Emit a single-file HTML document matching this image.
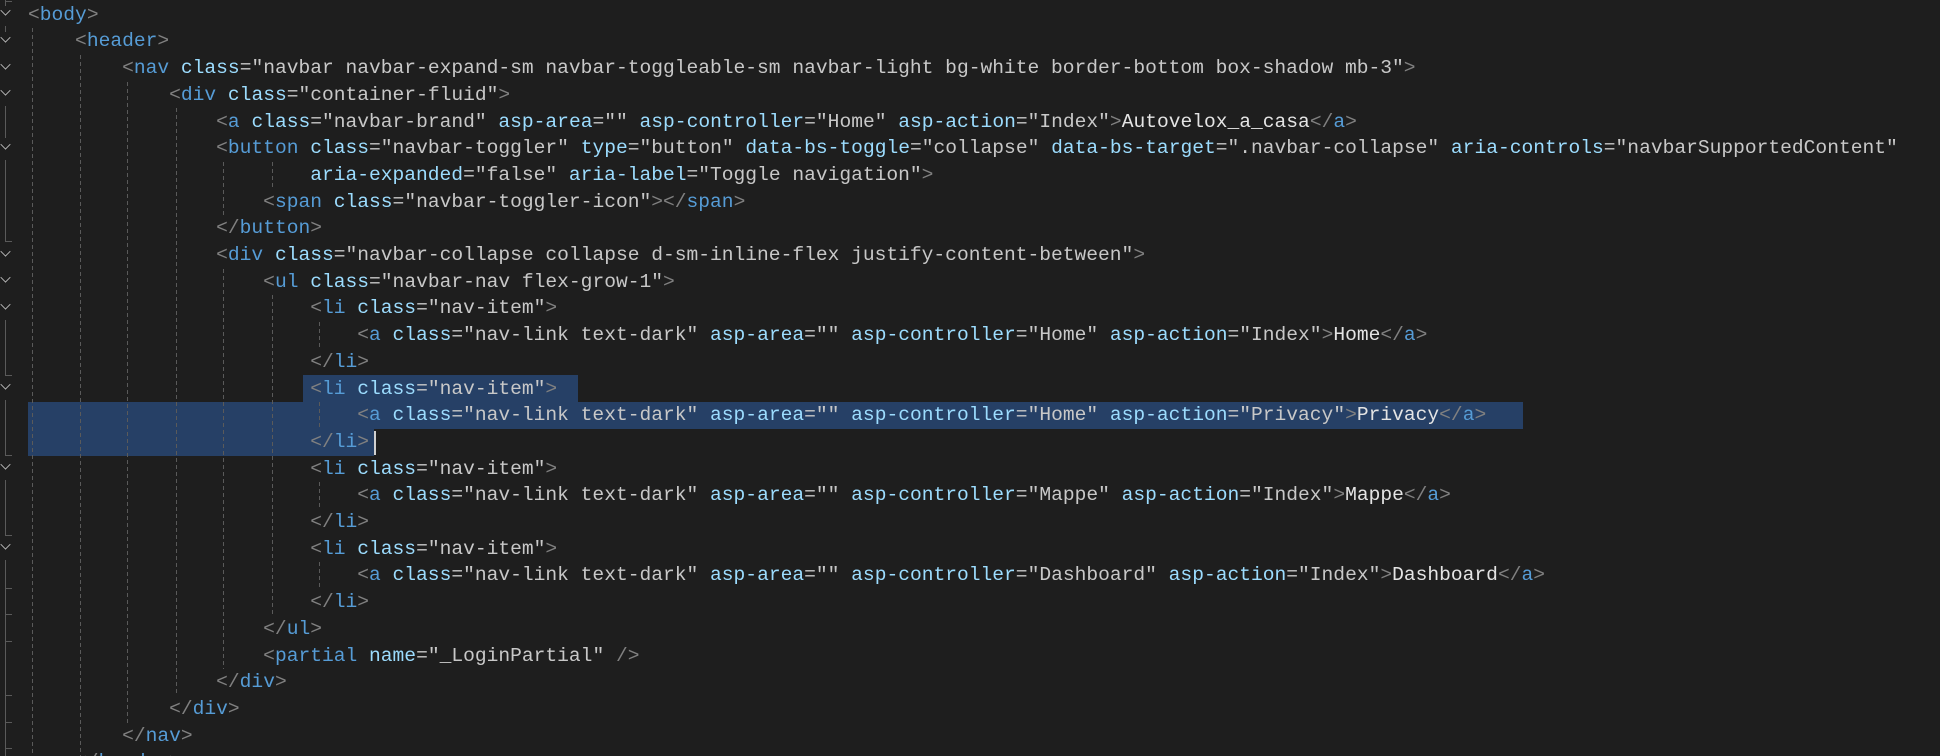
<!DOCTYPE html>
<html><head><meta charset="utf-8"><style>
html,body{margin:0;padding:0;background:#1e1e1e;width:1940px;height:756px;overflow:hidden;}
#ed{position:relative;width:1940px;height:756px;font-family:"Liberation Mono",monospace;font-size:19.6px;}
.l{position:absolute;left:28px;height:26.7px;line-height:26.7px;white-space:pre;color:#c8c8c8;}
.b{color:#808080}.t{color:#569cd6}.n{color:#9cdcfe}.v{color:#c8c8c8}.x{color:#e4e4e4}
.g{position:absolute;width:1px;background:repeating-linear-gradient(to bottom,#5a5a5a 0 4px,transparent 4px 7px);}
.hl{position:absolute;background:#264066;}
.cv{position:absolute;left:1px;width:8px;height:8px;border-right:1.5px solid #c5c5c5;border-bottom:1.5px solid #c5c5c5;transform:rotate(45deg) scale(0.8,0.8);}
.fl{position:absolute;left:5px;width:1px;background:#5a5a5a;}
.tk{position:absolute;left:5px;width:7px;height:1px;background:#5a5a5a;}
</style></head><body><div id="ed">
<div class="hl" style="left:303px;top:375px;width:275px;height:27px"></div>
<div class="hl" style="left:28px;top:402px;width:1495px;height:27px"></div>
<div class="hl" style="left:28px;top:429px;width:346px;height:27px"></div>
<div style="position:absolute;left:374px;top:431px;width:2px;height:24px;background:#d0d0d0"></div>

<div class="g" style="left:32px;top:28px;height:728px"></div>
<div class="g" style="left:80px;top:55px;height:701px"></div>
<div class="g" style="left:127px;top:82px;height:641px"></div>
<div class="g" style="left:176px;top:108px;height:588px"></div>
<div class="g" style="left:223px;top:162px;height:54px"></div>
<div class="g" style="left:223px;top:269px;height:400px"></div>
<div class="g" style="left:272px;top:162px;height:27px"></div>
<div class="g" style="left:272px;top:295px;height:320px"></div>
<div class="g" style="left:319px;top:322px;height:27px"></div>
<div class="g" style="left:319px;top:402px;height:27px"></div>
<div class="g" style="left:319px;top:482px;height:27px"></div>
<div class="g" style="left:319px;top:562px;height:27px"></div>

<div class="cv" style="top:6px"></div>
<div class="cv" style="top:33px"></div>
<div class="cv" style="top:60px"></div>
<div class="cv" style="top:86px"></div>
<div class="cv" style="top:140px"></div>
<div class="cv" style="top:247px"></div>
<div class="cv" style="top:273px"></div>
<div class="cv" style="top:300px"></div>
<div class="cv" style="top:380px"></div>
<div class="cv" style="top:460px"></div>
<div class="cv" style="top:540px"></div>
<div class="fl" style="top:106px;height:32px"></div>
<div class="fl" style="top:160px;height:82px"></div><div class="tk" style="top:241px"></div>
<div class="fl" style="top:320px;height:56px"></div><div class="tk" style="top:375px"></div>
<div class="fl" style="top:400px;height:56px"></div><div class="tk" style="top:455px"></div>
<div class="fl" style="top:480px;height:56px"></div><div class="tk" style="top:535px"></div>
<div class="fl" style="top:560px;height:196px"></div>
<div class="tk" style="top:588px"></div><div class="tk" style="top:614px"></div><div class="tk" style="top:641px"></div><div class="tk" style="top:695px"></div><div class="tk" style="top:722px"></div><div class="tk" style="top:748px"></div>
<div class="fl" style="top:0px;height:6px"></div><div class="tk" style="top:1px"></div>
<div class="fl" style="top:26px;height:6px"></div>

<div class="l" style="top:1.7px"><span class="b">&lt;</span><span class="t">body</span><span class="b">&gt;</span></div>
<div class="l" style="top:28.4px">    <span class="b">&lt;</span><span class="t">header</span><span class="b">&gt;</span></div>
<div class="l" style="top:55.1px">        <span class="b">&lt;</span><span class="t">nav</span> <span class="n">class</span>=<span class="v">"navbar navbar-expand-sm navbar-toggleable-sm navbar-light bg-white border-bottom box-shadow mb-3"</span><span class="b">&gt;</span></div>
<div class="l" style="top:81.8px">            <span class="b">&lt;</span><span class="t">div</span> <span class="n">class</span>=<span class="v">"container-fluid"</span><span class="b">&gt;</span></div>
<div class="l" style="top:108.5px">                <span class="b">&lt;</span><span class="t">a</span> <span class="n">class</span>=<span class="v">"navbar-brand"</span> <span class="n">asp-area</span>=<span class="v">""</span> <span class="n">asp-controller</span>=<span class="v">"Home"</span> <span class="n">asp-action</span>=<span class="v">"Index"</span><span class="b">&gt;</span><span class="x">Autovelox_a_casa</span><span class="b">&lt;/</span><span class="t">a</span><span class="b">&gt;</span></div>
<div class="l" style="top:135.2px">                <span class="b">&lt;</span><span class="t">button</span> <span class="n">class</span>=<span class="v">"navbar-toggler"</span> <span class="n">type</span>=<span class="v">"button"</span> <span class="n">data-bs-toggle</span>=<span class="v">"collapse"</span> <span class="n">data-bs-target</span>=<span class="v">".navbar-collapse"</span> <span class="n">aria-controls</span>=<span class="v">"navbarSupportedContent"</span></div>
<div class="l" style="top:161.9px">                        <span class="n">aria-expanded</span>=<span class="v">"false"</span> <span class="n">aria-label</span>=<span class="v">"Toggle navigation"</span><span class="b">&gt;</span></div>
<div class="l" style="top:188.6px">                    <span class="b">&lt;</span><span class="t">span</span> <span class="n">class</span>=<span class="v">"navbar-toggler-icon"</span><span class="b">&gt;&lt;/</span><span class="t">span</span><span class="b">&gt;</span></div>
<div class="l" style="top:215.3px">                <span class="b">&lt;/</span><span class="t">button</span><span class="b">&gt;</span></div>
<div class="l" style="top:242px">                <span class="b">&lt;</span><span class="t">div</span> <span class="n">class</span>=<span class="v">"navbar-collapse collapse d-sm-inline-flex justify-content-between"</span><span class="b">&gt;</span></div>
<div class="l" style="top:268.7px">                    <span class="b">&lt;</span><span class="t">ul</span> <span class="n">class</span>=<span class="v">"navbar-nav flex-grow-1"</span><span class="b">&gt;</span></div>
<div class="l" style="top:295.4px">                        <span class="b">&lt;</span><span class="t">li</span> <span class="n">class</span>=<span class="v">"nav-item"</span><span class="b">&gt;</span></div>
<div class="l" style="top:322.1px">                            <span class="b">&lt;</span><span class="t">a</span> <span class="n">class</span>=<span class="v">"nav-link text-dark"</span> <span class="n">asp-area</span>=<span class="v">""</span> <span class="n">asp-controller</span>=<span class="v">"Home"</span> <span class="n">asp-action</span>=<span class="v">"Index"</span><span class="b">&gt;</span><span class="x">Home</span><span class="b">&lt;/</span><span class="t">a</span><span class="b">&gt;</span></div>
<div class="l" style="top:348.8px">                        <span class="b">&lt;/</span><span class="t">li</span><span class="b">&gt;</span></div>
<div class="l" style="top:375.5px">                        <span class="b">&lt;</span><span class="t">li</span> <span class="n">class</span>=<span class="v">"nav-item"</span><span class="b">&gt;</span></div>
<div class="l" style="top:402.2px">                            <span class="b">&lt;</span><span class="t">a</span> <span class="n">class</span>=<span class="v">"nav-link text-dark"</span> <span class="n">asp-area</span>=<span class="v">""</span> <span class="n">asp-controller</span>=<span class="v">"Home"</span> <span class="n">asp-action</span>=<span class="v">"Privacy"</span><span class="b">&gt;</span><span class="x">Privacy</span><span class="b">&lt;/</span><span class="t">a</span><span class="b">&gt;</span></div>
<div class="l" style="top:428.9px">                        <span class="b">&lt;/</span><span class="t">li</span><span class="b">&gt;</span></div>
<div class="l" style="top:455.6px">                        <span class="b">&lt;</span><span class="t">li</span> <span class="n">class</span>=<span class="v">"nav-item"</span><span class="b">&gt;</span></div>
<div class="l" style="top:482.3px">                            <span class="b">&lt;</span><span class="t">a</span> <span class="n">class</span>=<span class="v">"nav-link text-dark"</span> <span class="n">asp-area</span>=<span class="v">""</span> <span class="n">asp-controller</span>=<span class="v">"Mappe"</span> <span class="n">asp-action</span>=<span class="v">"Index"</span><span class="b">&gt;</span><span class="x">Mappe</span><span class="b">&lt;/</span><span class="t">a</span><span class="b">&gt;</span></div>
<div class="l" style="top:509px">                        <span class="b">&lt;/</span><span class="t">li</span><span class="b">&gt;</span></div>
<div class="l" style="top:535.7px">                        <span class="b">&lt;</span><span class="t">li</span> <span class="n">class</span>=<span class="v">"nav-item"</span><span class="b">&gt;</span></div>
<div class="l" style="top:562.4px">                            <span class="b">&lt;</span><span class="t">a</span> <span class="n">class</span>=<span class="v">"nav-link text-dark"</span> <span class="n">asp-area</span>=<span class="v">""</span> <span class="n">asp-controller</span>=<span class="v">"Dashboard"</span> <span class="n">asp-action</span>=<span class="v">"Index"</span><span class="b">&gt;</span><span class="x">Dashboard</span><span class="b">&lt;/</span><span class="t">a</span><span class="b">&gt;</span></div>
<div class="l" style="top:589.1px">                        <span class="b">&lt;/</span><span class="t">li</span><span class="b">&gt;</span></div>
<div class="l" style="top:615.8px">                    <span class="b">&lt;/</span><span class="t">ul</span><span class="b">&gt;</span></div>
<div class="l" style="top:642.5px">                    <span class="b">&lt;</span><span class="t">partial</span> <span class="n">name</span>=<span class="v">"_LoginPartial"</span> <span class="b">/&gt;</span></div>
<div class="l" style="top:669.2px">                <span class="b">&lt;/</span><span class="t">div</span><span class="b">&gt;</span></div>
<div class="l" style="top:695.9px">            <span class="b">&lt;/</span><span class="t">div</span><span class="b">&gt;</span></div>
<div class="l" style="top:722.6px">        <span class="b">&lt;/</span><span class="t">nav</span><span class="b">&gt;</span></div>
<div class="l" style="top:749.3px">    <span class="b">&lt;/</span><span class="t">header</span><span class="b">&gt;</span></div>
</div></body></html>
